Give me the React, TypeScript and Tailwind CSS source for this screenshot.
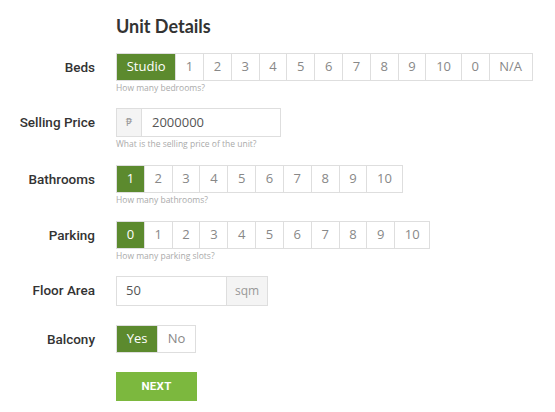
import React, { useState } from "react";

const heading = { fontFamily: 'Lato, "Noto Sans", sans-serif' };
const label = { fontFamily: 'Roboto, "Noto Sans", sans-serif' };
const body = { fontFamily: '"Open Sans", "Noto Sans", sans-serif' };

interface ChoiceGroupProps {
  options: string[];
  selected: string;
  onSelect: (v: string) => void;
}

const ChoiceGroup: React.FC<ChoiceGroupProps> = ({ options, selected, onSelect }) => {
  return (
    <div className="flex">
      {options.map((opt, i) => (
        <button
          key={opt}
          onClick={() => onSelect(opt)}
          style={body}
          className={
            "h-[28px] px-[9.7px] text-[13px] border-y border-r border-[#dedede] " +
            (i === 0 ? "border-l " : "") +
            (opt === selected ? "bg-[#5c8a2e] border-[#5c8a2e] text-white" : "bg-white text-[#888]")
          }
        >
          {opt}
        </button>
      ))}
    </div>
  );
};

const Help: React.FC<{ text: string }> = ({ text }) => (
  <div style={body} className="mt-[1px] text-[8.5px] leading-[12px] text-[#aaa]">
    {text}
  </div>
);

const Row: React.FC<{ label: string; children: React.ReactNode; className?: string }> = ({
  label: text,
  children,
  className = "",
}) => (
  <div className={"flex items-start " + className}>
    <div
      style={label}
      className="w-[95px] shrink-0 text-right text-[13.5px] font-medium text-[#333] h-[28px] flex items-center justify-end"
    >
      {text}
    </div>
    <div className="ml-[21px]">{children}</div>
  </div>
);

export default function App() {
  const [beds, setBeds] = useState("Studio");
  const [baths, setBaths] = useState("1");
  const [parking, setParking] = useState("0");
  const [balcony, setBalcony] = useState("Yes");
  const [price, setPrice] = useState("2000000");
  const [area, setArea] = useState("50");

  const nums = ["1", "2", "3", "4", "5", "6", "7", "8", "9", "10"];

  return (
    <div className="w-[555px] h-[412px] bg-white overflow-hidden">
      <h1 style={heading} className="ml-[116px] pt-[14px] text-[18px] font-bold leading-[24px] text-[#333]">
        Unit Details
      </h1>

      <Row label="Beds" className="mt-[15px] mb-[14px]">
        <ChoiceGroup options={["Studio", ...nums, "0", "N/A"]} selected={beds} onSelect={setBeds} />
        <Help text="How many bedrooms?" />
      </Row>

      <Row label="Selling Price" className="mb-[15px]">
        <div className="flex h-[29px] w-[165px] border border-[#dedede]">
          <span
            style={body}
            className="w-[25px] flex items-center justify-center bg-[#f4f4f4] border-r border-[#dedede] text-[11px] text-[#999]"
          >
            ₱
          </span>
          <input
            style={body}
            value={price}
            onChange={(e) => setPrice(e.target.value)}
            className="flex-1 min-w-0 px-[10px] text-[13px] text-[#555] outline-none"
          />
        </div>
        <Help text="What is the selling price of the unit?" />
      </Row>

      <Row label="Bathrooms" className="mb-[15px]">
        <ChoiceGroup options={nums} selected={baths} onSelect={setBaths} />
        <Help text="How many bathrooms?" />
      </Row>

      <Row label="Parking" className="mb-[14px]">
        <ChoiceGroup options={["0", ...nums]} selected={parking} onSelect={setParking} />
        <Help text="How many parking slots?" />
      </Row>

      <Row label="Floor Area" className="mb-[19px]">
        <div className="flex h-[30px] w-[152px] border border-[#dedede]">
          <input
            style={body}
            value={area}
            onChange={(e) => setArea(e.target.value)}
            className="flex-1 min-w-0 px-[9px] text-[13px] text-[#555] outline-none"
          />
          <span
            style={body}
            className="w-[41px] flex items-center justify-center bg-[#f4f4f4] border-l border-[#dedede] text-[12px] text-[#999]"
          >
            sqm
          </span>
        </div>
      </Row>

      <Row label="Balcony" className="mb-[19px]">
        <ChoiceGroup options={["Yes", "No"]} selected={balcony} onSelect={setBalcony} />
      </Row>

      <div className="ml-[116px]">
        <button
          style={label}
          className="h-[29px] w-[81px] bg-[#7cb83e] text-white text-[11.5px] font-bold tracking-wide"
        >
          NEXT
        </button>
      </div>
    </div>
  );
}
